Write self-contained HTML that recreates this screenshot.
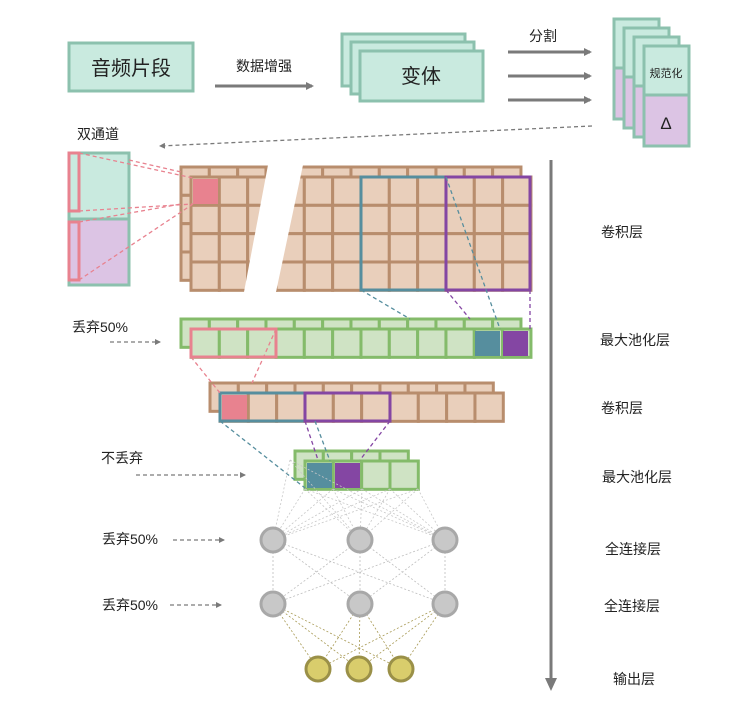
<!DOCTYPE html>
<html><head><meta charset="utf-8"><style>
html,body{margin:0;padding:0;background:#fff;}
svg{display:block;}
text{font-family:"Liberation Sans","Noto Sans CJK SC",sans-serif;fill:#222;}
</style></head><body>
<svg id="s" width="754" height="717" viewBox="0 0 754 717" xmlns="http://www.w3.org/2000/svg">
<defs>
<marker id="ah" markerWidth="8" markerHeight="8" refX="6" refY="4" orient="auto" markerUnits="userSpaceOnUse"><path d="M0,0 L8,4 L0,8 z" fill="#7a7a7a"/></marker>
<marker id="ah2" markerWidth="6" markerHeight="6" refX="5" refY="3" orient="auto" markerUnits="userSpaceOnUse"><path d="M0,0 L6,3 L0,6 z" fill="#7a7a7a"/></marker>
</defs>
<rect x="69" y="43" width="124" height="48" fill="#c9eadf" stroke="#8cc1ae" stroke-width="3"/>
<text x="131" y="75" font-size="20" text-anchor="middle">音频片段</text>
<text x="264" y="71" font-size="14" text-anchor="middle">数据增强</text>
<line x1="215" y1="86" x2="312" y2="86" stroke="#7a7a7a" stroke-width="3" marker-end="url(#ah)"/>
<rect x="342" y="34" width="123" height="52" fill="#c9eadf" stroke="#8cc1ae" stroke-width="3"/>
<rect x="351" y="42" width="123" height="52" fill="#c9eadf" stroke="#8cc1ae" stroke-width="3"/>
<rect x="360" y="51" width="123" height="50" fill="#c9eadf" stroke="#8cc1ae" stroke-width="3"/>
<text x="421" y="83" font-size="20" text-anchor="middle">变体</text>
<text x="543" y="41" font-size="14" text-anchor="middle">分割</text>
<line x1="508" y1="52" x2="590" y2="52" stroke="#7a7a7a" stroke-width="3" marker-end="url(#ah)"/>
<line x1="508" y1="76" x2="590" y2="76" stroke="#7a7a7a" stroke-width="3" marker-end="url(#ah)"/>
<line x1="508" y1="100" x2="590" y2="100" stroke="#7a7a7a" stroke-width="3" marker-end="url(#ah)"/>
<g id="stack"></g>
<text x="666" y="77" font-size="11" text-anchor="middle">规范化</text>
<text x="666" y="129" font-size="17" text-anchor="middle">Δ</text>
<line x1="592" y1="126" x2="160" y2="146" stroke="#7a7a7a" stroke-width="1.3" stroke-dasharray="4,3" marker-end="url(#ah2)"/>
<text x="98" y="139" font-size="14" text-anchor="middle">双通道</text>
<rect x="69" y="153" width="60" height="66" fill="#c9eadf" stroke="#8cc1ae" stroke-width="3"/>
<rect x="69" y="219" width="60" height="66" fill="#dcc4e4" stroke="#8cc1ae" stroke-width="3"/>
<rect x="69" y="153" width="10" height="58" fill="none" stroke="#e8828f" stroke-width="3"/>
<rect x="69" y="222" width="10" height="58" fill="none" stroke="#e8828f" stroke-width="3"/>
<g id="g"></g>
<line x1="551" y1="160" x2="551" y2="682" stroke="#7a7a7a" stroke-width="3"/>
<path d="M545,678 L551,691 L557,678 z" fill="#7a7a7a"/>
<g font-size="14" text-anchor="middle">
<text x="622" y="237">卷积层</text>
<text x="635" y="345">最大池化层</text>
<text x="622" y="413">卷积层</text>
<text x="637" y="482">最大池化层</text>
<text x="633" y="554">全连接层</text>
<text x="632" y="611">全连接层</text>
<text x="634" y="684">输出层</text>
<text x="100" y="332">丢弃50%</text>
<text x="122" y="463">不丢弃</text>
<text x="130" y="544">丢弃50%</text>
<text x="130" y="610">丢弃50%</text>
</g>
<g stroke="#7a7a7a" stroke-width="1.3" stroke-dasharray="4,3">
<line x1="110" y1="342" x2="160" y2="342" marker-end="url(#ah2)"/>
<line x1="136" y1="475" x2="245" y2="475" marker-end="url(#ah2)"/>
<line x1="173" y1="540" x2="224" y2="540" marker-end="url(#ah2)"/>
<line x1="170" y1="605" x2="221" y2="605" marker-end="url(#ah2)"/>
</g>
</svg>
<script>
(function(){
var NS="http://www.w3.org/2000/svg";
function el(p,t,a){var e=document.createElementNS(NS,t);for(var k in a)e.setAttribute(k,a[k]);p.appendChild(e);return e;}
var st=document.getElementById('stack');
[[614,19],[624,28],[634,37],[644,46]].forEach(function(p){
 el(st,'rect',{x:p[0],y:p[1],width:45,height:49,fill:'#c9eadf',stroke:'#8cc1ae','stroke-width':3});
 el(st,'rect',{x:p[0],y:p[1]+49,width:45,height:51,fill:'#dcc4e4',stroke:'#8cc1ae','stroke-width':3});
});
var g=document.getElementById('g');
var BF='#e9cfbb',BS='#b88d6d',GF='#cfe3c4',GS='#84bb6a',PK='#e8828f',TL='#568e9e',PU='#8446a3';
function grid(x,y,cols,rows,c,fill,stroke){for(var i=0;i<cols;i++)for(var j=0;j<rows;j++)el(g,'rect',{x:x+i*c,y:y+j*c,width:c,height:c,fill:fill,stroke:stroke,'stroke-width':3});}
function dl(x1,y1,x2,y2,col,w){el(g,'line',{x1:x1,y1:y1,x2:x2,y2:y2,stroke:col,'stroke-width':w||1.3,'stroke-dasharray':'4,3'});}
var c=28.33;
grid(181,167,12,4,c,BF,BS);
grid(191,177,12,4,c,BF,BS);
el(g,'polygon',{points:'268,165 303,165 276,292 244,292',fill:'#fff'});
el(g,'rect',{x:193,y:179,width:25,height:25,fill:PK});
dl(79,153,193,178,PK);dl(79,211,193,204,PK);dl(79,222,181,204,PK);dl(79,280,193,204,PK);dl(129,160,181,172,PK);
el(g,'rect',{x:361,y:177,width:85,height:113,fill:'none',stroke:TL,'stroke-width':3});
el(g,'rect',{x:446,y:177,width:84,height:113,fill:'none',stroke:PU,'stroke-width':3});
grid(181,319,12,1,c,GF,GS);
grid(191,329,12,1,c,GF,GS);
el(g,'rect',{x:475,y:331,width:25,height:25,fill:TL});
el(g,'rect',{x:503,y:331,width:25,height:25,fill:PU});
el(g,'rect',{x:191,y:329,width:85,height:28,fill:'none',stroke:PK,'stroke-width':3});
dl(361,290,410,319,TL);dl(446,290,470,319,PU);dl(446,177,500,329,TL);dl(530,290,530,329,PU);
grid(210,383,10,1,c,BF,BS);
grid(220,393,10,1,c,BF,BS);
el(g,'rect',{x:222,y:395,width:25,height:25,fill:PK});
el(g,'rect',{x:220,y:393,width:85,height:28,fill:'none',stroke:TL,'stroke-width':3});
el(g,'rect',{x:305,y:393,width:85,height:28,fill:'none',stroke:PU,'stroke-width':3});
dl(191,357,220,393,PK);dl(276,329,252,383,PK);
grid(295,451,4,1,c,GF,GS);
grid(305,461,4,1,c,GF,GS);
el(g,'rect',{x:307,y:463,width:25,height:25,fill:TL});
el(g,'rect',{x:335,y:463,width:25,height:25,fill:PU});
dl(220,421,305,488,TL);dl(305,421,318,460,PU);dl(315,421,330,461,TL);dl(390,421,360,460,PU);
var r1=[[273,540],[360,540],[445,540]],r2=[[273,604],[360,604],[445,604]],r3=[[318,669],[359,669],[401,669]];
var topPts=[[305,489],[333,489],[362,489],[390,489],[418,489],[290,460]];
topPts.forEach(function(a){r1.forEach(function(b){el(g,'line',{x1:a[0],y1:a[1],x2:b[0],y2:b[1],stroke:'#c8c8c8','stroke-width':0.8,'stroke-dasharray':'2,2'});});});
r1.forEach(function(a){r2.forEach(function(b){el(g,'line',{x1:a[0],y1:a[1],x2:b[0],y2:b[1],stroke:'#bdbdbd','stroke-width':0.8,'stroke-dasharray':'2,2'});});});
r2.forEach(function(a){r3.forEach(function(b){el(g,'line',{x1:a[0],y1:a[1],x2:b[0],y2:b[1],stroke:'#a89a55','stroke-width':0.8,'stroke-dasharray':'2,2'});});});
r1.concat(r2).forEach(function(p){el(g,'circle',{cx:p[0],cy:p[1],r:12,fill:'#c8c8c8',stroke:'#a8a8a8','stroke-width':3});});
r3.forEach(function(p){el(g,'circle',{cx:p[0],cy:p[1],r:12,fill:'#d9cd6c',stroke:'#9a9048','stroke-width':3});});
})();
</script>
</body></html>
